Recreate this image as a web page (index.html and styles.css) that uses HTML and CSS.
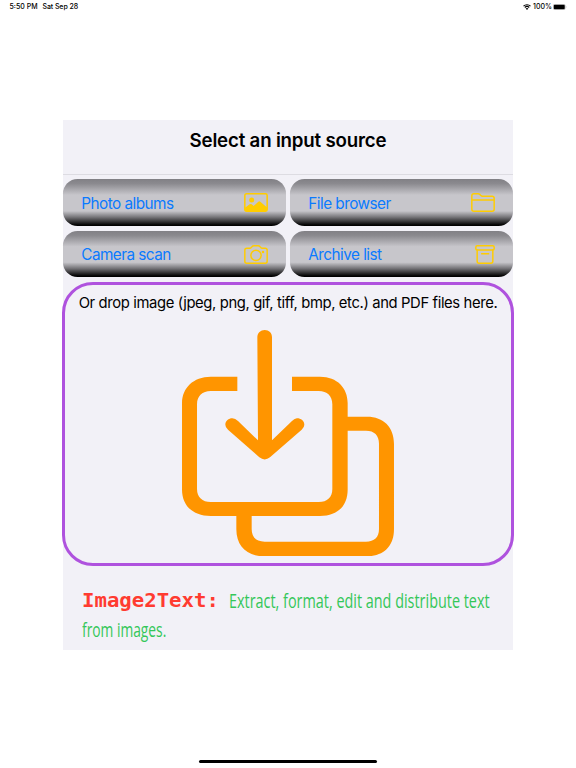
FILE: index.html
```html
<!DOCTYPE html>
<html lang="en">
<head>
<meta charset="utf-8">
<title>Image2Text</title>
<link rel="stylesheet" href="styles.css">
</head>
<body>
<header class="status">
  <span class="time">5:50 PM</span>
  <span class="date">Sat Sep 28</span>
  <svg class="wifi" width="8" height="6" viewBox="0 0 16 12"><path d="M1 4.3a10 10 0 0 1 14 0M3.6 7a6.3 6.3 0 0 1 8.8 0" fill="none" stroke="#000" stroke-width="2.2"/><path d="M5.3 9a4 4 0 0 1 5.4 0L8 11.8z"/></svg>
  <span class="percent">100%</span>
  <svg class="battery" width="14" height="6" viewBox="0 0 28 12"><rect x=".5" y=".5" width="24" height="11" rx="3.2" fill="none" stroke="#999"/><rect x="1.5" y="1.5" width="22" height="9" rx="2"/><path d="M26 4q1.6 2 0 4z" fill="#999"/></svg>
</header>
<main class="panel">
  <h1 class="title"><span>Select an input source</span></h1>
  <div class="sources">
    <button class="source"><span>Photo albums</span>
      <svg width="24" height="19" viewBox="0 0 72 57"><rect x="2.5" y="2.5" width="67" height="52" rx="5" fill="none" stroke="currentColor" stroke-width="4.6"/><circle cx="23" cy="21" r="7.5" fill="currentColor"/><path d="M2 45l15-11q3-2 6 0l6 5 14-13q3-2 6 0l21 18v6q0 5-5 5H7q-5 0-5-5z" fill="currentColor"/></svg>
    </button>
    <button class="source"><span>File browser</span>
      <svg width="24" height="19" viewBox="0 0 72 57"><path d="M2.5 49V8q0-5.500 6-5.500h13q3 0 5 2l3 3q2 2 5 2h29q6 0 6 6v33q0 6-6 6H8.500q-6 0-6-6zM2 21h68" fill="none" stroke="currentColor" stroke-width="4.400"/></svg>
    </button>
    <button class="source"><span>Camera scan</span>
      <svg width="24" height="19" viewBox="0 0 72 57"><g fill="none" stroke="currentColor" stroke-width="4.400"><path d="M8.500 10h8.500q3 0 5-3l2-2q2-2.500 6-2.500h12q4 0 6 2.500l2 2q2 3 5 3h8.500q6 0 6 6v32.500q0 6-6 6h-55q-6 0-6-6V16q0-6 6-6z"/><circle cx="36" cy="31" r="15.500"/></g><circle cx="57" cy="21" r="3.800" fill="currentColor"/></svg>
    </button>
    <button class="source"><span>Archive list</span>
      <svg width="20" height="19" viewBox="0 0 60 57"><g fill="none" stroke="currentColor" stroke-width="4.400"><rect x="2.500" y="2.500" width="55" height="12.500" rx="4"/><path d="M6.500 15v33.500q0 6 6 6h35q6 0 6-6V15M20 26h21" stroke-linecap="round"/></g></svg>
    </button>
  </div>
  <section class="drop">
    <p class="hint"><span>Or drop image (jpeg, png, gif, tiff, bmp, etc.) and PDF files here.</span></p>
    <svg class="drop-icon" viewBox="36 29 636 679">
      <path fill="#ff9500" d="M202 169H122C70 169 36 203 36 248V508C36 554 67 587 122 587H199V627C199 677 230 708 282 708H590C642 708 672 677 672 627V370C672 321 641 289 591 289H533V248C533 203 502 169 450 169H366V212H446C472 212 487 227 487 252V506C487 531 472 545 446 545H122C97 545 81 531 81 506V252C81 227 97 212 122 212H202ZM533 331H588C613 331 627 345 627 370V626C627 651 613 664 588 664H284C259 664 245 651 245 626V587H450C505 587 533 554 533 508Z"/>
      <path fill="#ff9500" d="M262 51C262 38 272 29 284 29C297 29 306 38 306 51L306 360L366 302Q374 294 381 294C393 294 403 302 403 313Q403 321 395 328L300 411Q284 424 268 411L174 328Q166 321 166 313C166 302 176 294 187 294Q196 294 204 302L264 360Z"/>
    </svg>
  </section>
  <footer class="tagline">
    <p class="line"><strong class="brand"><span>Image2Text:</span></strong><span class="copy"><span>Extract, format, edit and distribute text</span></span></p>
    <p class="line"><span class="copy"><span class="tail">from images.</span></span></p>
  </footer>
</main>
<div class="home"></div>
</body>
</html>
```
FILE: styles.css
```css
* { box-sizing: border-box; }
body {
  margin: 0;
  width: 576px;
  height: 768px;
  overflow: hidden;
  display: flex;
  flex-direction: column;
  align-items: center;
  background: #fff;
  color: #000;
  font-family: Inter, "Liberation Sans", sans-serif;
}
.status {
  display: flex;
  align-items: center;
  width: 100%;
  height: 14px;
  padding: 0 9px 0 9.5px;
  font-size: 7px;
  font-weight: 500;
  line-height: 14px;
}
.time { width: 33px; white-space: nowrap; }
.date { letter-spacing: -.08px; }
.wifi { margin-left: auto; }
.percent { margin: 0 1px 0 2px; }
.panel {
  width: 449.4px;
  height: 530px;
  margin-top: 106px;
  background: #f2f1f7;
}
.title {
  display: flex;
  justify-content: center;
  height: 55px;
  margin: 0;
  border-bottom: 1px solid #dddce2;
  font-size: 18.7px;
  font-weight: 600;
  line-height: 41px;
  letter-spacing: -.19px;
  white-space: nowrap;
}
.sources {
  display: grid;
  grid-template-columns: 1fr 1fr;
  gap: 4.7px;
  padding-top: 4.3px;
}
.source {
  display: flex;
  align-items: center;
  justify-content: space-between;
  height: 46.7px;
  padding: 0 18px;
  border: 0;
  border-radius: 14.5px;
  background: linear-gradient(#818085 0, #8b8a8f 10%, #c7c6cb 34%, #c7c6cb 68%, #77767a 81%, #000 98%);
  color: #0a7aff;
  font: 400 15.3px Inter, "Liberation Sans", sans-serif;
  letter-spacing: -.53px;
}
.source span { white-space: nowrap; padding-top: 1px; }
.source svg { color: #fc0; }
.drop {
  display: flex;
  flex-direction: column;
  width: 452px;
  height: 284px;
  margin: 4.7px 0 0 -1.3px;
  border: 3px solid #af52de;
  border-radius: 31px;
}
.hint {
  margin: 7px 0 0;
  height: 24px;
  text-align: center;
  font-size: 14.8px;
  line-height: 22px;
  letter-spacing: -.37px;
  white-space: nowrap;
}
.drop-icon {
  width: 212px;
  height: 226.3px;
  margin: 13.7px 0 0 117px;
}
.tagline { padding: 20px 19px 0; }
.line { display: flex; margin: 0; height: 29px; line-height: 29px; white-space: nowrap; }
.brand {
  flex: none;
  width: 146.5px;
  color: #ff3b30;
  font: 700 19.5px/29px "DejaVu Sans Mono", monospace;
}
.brand > span { display: inline-block; transform: scaleX(1.06); transform-origin: 0 50%; }
.copy {
  color: #34c759;
  font: 400 20px/29px "Open Sans", sans-serif;
}
.copy > span { display: inline-block; transform: scaleX(.72); transform-origin: 0 50%; }
.copy > .tail { transform: scaleX(.69); }
.home {
  width: 178px;
  height: 3px;
  margin-top: 110px;
  border-radius: 2px;
  background: #000;
}
```
